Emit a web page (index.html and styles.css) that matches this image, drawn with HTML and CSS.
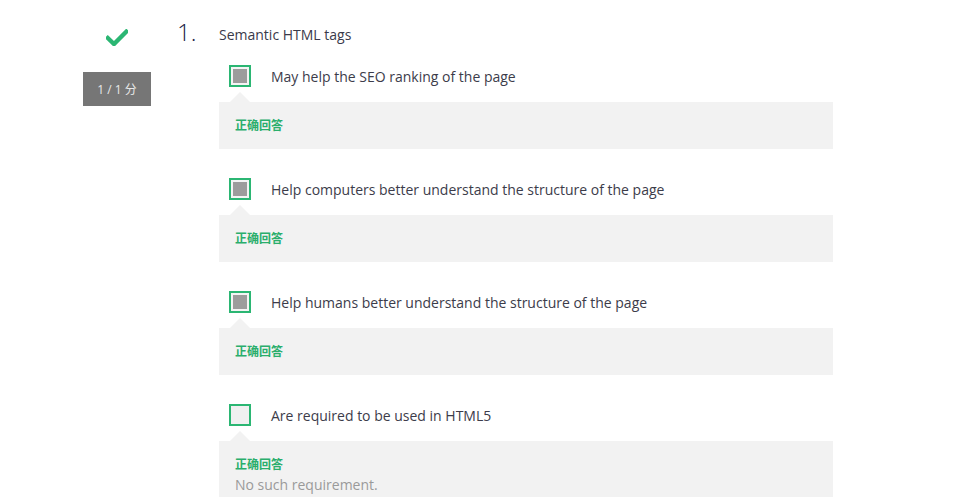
FILE: index.html
```html
<!DOCTYPE html>
<html lang="zh">
<head>
<meta charset="utf-8">
<title>Quiz</title>
<link rel="stylesheet" href="styles.css">
</head>
<body>
<div class="question">
  <div class="side">
    <svg class="check" width="22" height="17" viewBox="0 0 22 17"><path d="M1.8 9 L8 15 L20.3 2.7" fill="none" stroke="#2bb673" stroke-width="4.4" stroke-linecap="square" stroke-linejoin="miter"/></svg>
    <div class="score">1 / 1 分</div>
  </div>
  <div class="num">1.</div>
  <div class="content">
    <div class="title">Semantic HTML tags</div>

    <div class="option">
      <span class="box checked"></span>
      <span class="opt-text">May help the SEO ranking of the page</span>
    </div>
    <div class="feedback"><div class="label">正确回答</div></div>

    <div class="option">
      <span class="box checked"></span>
      <span class="opt-text">Help computers better understand the structure of the page</span>
    </div>
    <div class="feedback"><div class="label">正确回答</div></div>

    <div class="option">
      <span class="box checked"></span>
      <span class="opt-text">Help humans better understand the structure of the page</span>
    </div>
    <div class="feedback"><div class="label">正确回答</div></div>

    <div class="option">
      <span class="box"></span>
      <span class="opt-text">Are required to be used in HTML5</span>
    </div>
    <div class="feedback"><div class="label">正确回答</div><div class="expl">No such requirement.</div></div>
  </div>
</div>
</body>
</html>
```
FILE: styles.css
```css
html, body {
  margin: 0;
  padding: 0;
  background: #fff;
  overflow: hidden;
}
body {
  font-family: "Open Sans", "Noto Sans CJK SC", sans-serif;
  color: #3c3c3c;
}
.question {
  display: flex;
  align-items: flex-start;
  padding-left: 83px;
}
.side {
  width: 68px;
  display: flex;
  flex-direction: column;
  align-items: center;
  padding-top: 29px;
}
.check { display: block; }
.score {
  margin-top: 26px;
  width: 68px;
  height: 34px;
  background: #767676;
  color: #e8e8e8;
  font-size: 12px;
  display: flex;
  align-items: center;
  justify-content: center;
}
.num {
  margin-left: 26px;
  width: 42px;
  padding-top: 15px;
  font-size: 24px;
  font-weight: 300;
  line-height: 34px;
  color: #1e1e46;
}
.content {
  width: 614px;
  padding-top: 25px;
}
.title {
  font-size: 14px;
  line-height: 20px;
  color: #3a3a4a;
}
.option {
  display: flex;
  align-items: center;
  gap: 20px;
  padding-left: 10px;
  margin-top: 29px;
  height: 22px;
}
.title + .option { margin-top: 20px; }
.box {
  box-sizing: border-box;
  width: 22px;
  height: 22px;
  border: 2px solid #2bb673;
  background: #f0f0f0;
  flex: none;
}
.box.checked {
  background: #9c9c9c;
  box-shadow: inset 0 0 0 2px #f4f4f4;
}
.opt-text {
  font-size: 14px;
  line-height: 20px;
  margin-top: 2px;
  color: #3c3c4a;
}
.feedback {
  position: relative;
  margin-top: 15px;
  background: #f2f2f2;
  padding: 14px 16px 16px;
}
.feedback::before {
  content: "";
  position: absolute;
  top: -10px;
  left: 11px;
  border-left: 10px solid transparent;
  border-right: 10px solid transparent;
  border-bottom: 10px solid #f2f2f2;
}
.label {
  font-family: "Noto Sans CJK SC", sans-serif;
  font-size: 12px;
  font-weight: 700;
  line-height: 17px;
  color: #2aae6c;
}
.expl {
  margin-top: 2px;
  font-size: 14px;
  line-height: 22px;
  color: #9a9a9a;
}
```
